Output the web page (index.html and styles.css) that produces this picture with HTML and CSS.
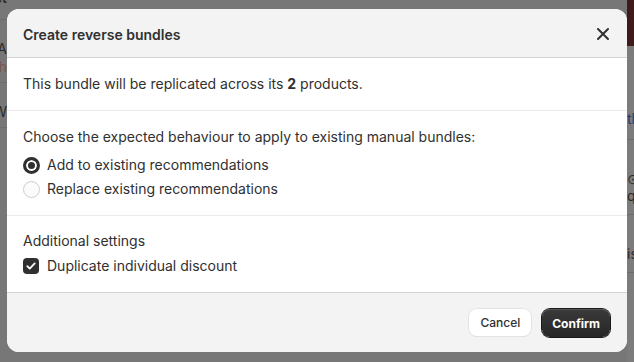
FILE: index.html
```html
<!DOCTYPE html>
<html lang="en">
<head>
    <meta charset="UTF-8">
    <meta name="viewport" content="width=device-width, initial-scale=1.0">
    <title>Create reverse bundles</title>
    <link rel="stylesheet" href="styles.css">
</head>
<body>
    <!-- page behind the modal, only the edges show -->
    <div class="page">
        <div class="page-left">
            <div class="row row-head">Product</div>
            <div class="row">IDA<br><span class="red">Sh</span></div>
            <div class="row">W</div>
        </div>
        <div class="page-right">
            <div class="thumb"></div>
            <div class="link">th</div>
            <div class="row">⊙<br>qu</div>
            <div class="row">is</div>
        </div>
    </div>

    <div class="overlay">
        <div class="modal">
            <div class="modal-header">
                <h2>Create reverse bundles</h2>
                <button class="close" aria-label="Close">
                    <svg width="20" height="20" viewBox="0 0 20 20"><path d="M5 5l10 10M15 5L5 15" stroke="#303030" stroke-width="2" stroke-linecap="round"/></svg>
                </button>
            </div>
            <div class="section">
                <p>This bundle will be replicated across its <b>2</b> products.</p>
            </div>
            <div class="section">
                <p>Choose the expected behaviour to apply to existing manual bundles:</p>
                <div class="options">
                    <label class="option"><span class="radio checked"></span>Add to existing recommendations</label>
                    <label class="option"><span class="radio"></span>Replace existing recommendations</label>
                </div>
            </div>
            <div class="section last">
                <p>Additional settings</p>
                <div class="options">
                    <label class="option">
                        <span class="checkbox">
                            <svg width="12" height="12" viewBox="0 0 12 12"><path d="M2.3 6.2l2.4 2.4 5-5.2" fill="none" stroke="#fff" stroke-width="1.8" stroke-linecap="round" stroke-linejoin="round"/></svg>
                        </span>Duplicate individual discount
                    </label>
                </div>
            </div>
            <div class="modal-footer">
                <button class="btn">Cancel</button>
                <button class="btn btn-primary">Confirm</button>
            </div>
        </div>
    </div>
</body>
</html>
```

FILE: styles.css
```css
body {
    margin: 0;
    font-family: Inter, "Noto Sans", sans-serif;
    font-size: 14px;
    color: #303030;
    background: #777;
    height: 362px;
    overflow: hidden;
}
.page {
    display: flex;
    justify-content: space-between;
    height: 362px;
}
.page-left {
    width: 7px;
    overflow: hidden;
    display: flex;
    flex-direction: column;
    align-items: flex-end;
    color: #2a2a2a;
    font-size: 14px;
    white-space: nowrap;
}
.page-left .row {
    border-bottom: 1px solid #6c6c6c;
    padding: 20px 0 6px;
    line-height: 18px;
    width: 60px;
    text-align: right;
}
.page-left .row-head {
    margin-top: -11px;
    padding-top: 0;
    font-weight: 600;
    padding-bottom: 12px;
}
.red {
    color: #7a5550;
}
.page-right {
    width: 7px;
    overflow: hidden;
    background: #7c7c7c;
    color: #2a2a2a;
    font-size: 14px;
    white-space: nowrap;
}
.thumb {
    height: 46px;
    background: #3e1a1a;
}
.link {
    color: #1d3f73;
    padding: 64px 0 12px;
    border-bottom: 1px solid #6c6c6c;
}
.page-right .row {
    padding: 30px 0 10px;
    border-bottom: 1px solid #6c6c6c;
}
.overlay {
    position: absolute;
    top: 0;
    left: 0;
    right: 0;
    bottom: 0;
    padding: 9px 7px;
}
.modal {
    background: #fff;
    border-radius: 12px;
    overflow: hidden;
    display: flex;
    flex-direction: column;
}
.modal-header {
    background: #f3f3f3;
    border-bottom: 1px solid #d4d4d4;
    height: 49px;
    box-sizing: border-box;
    display: flex;
    align-items: center;
    justify-content: space-between;
    padding: 2px 14px 0 16px;
    flex-shrink: 0;
}
.modal-header h2 {
    margin: 0;
    font-size: 14px;
    font-weight: 600;
}
.close {
    border: none;
    background: none;
    padding: 0;
    width: 20px;
    height: 20px;
}
.section {
    padding: 16px;
    border-bottom: 1px solid #ebebeb;
    flex-shrink: 0;
}
.section.last {
    border-bottom: none;
    padding-top: 15px;
}
.section p {
    margin: 0;
    line-height: 20px;
}
.section b {
    font-weight: 700;
}
.options {
    display: flex;
    flex-direction: column;
    gap: 4px;
    margin-top: 8px;
}
.section.last .options {
    margin-top: 5px;
}
.option {
    display: flex;
    align-items: center;
    gap: 7px;
    line-height: 20px;
}
.radio {
    width: 17px;
    height: 17px;
    border-radius: 50%;
    box-sizing: border-box;
    border: 1px solid #cdcdcd;
    background: #fbfbfb;
}
.radio.checked {
    border: 3px solid #303030;
    background: #303030;
    box-shadow: inset 0 0 0 2px #fff;
}
.checkbox {
    width: 16px;
    height: 16px;
    margin-right: 1px;
    border-radius: 4px;
    background: #303030;
    display: flex;
    align-items: center;
    justify-content: center;
}
.modal-footer {
    background: #f3f3f3;
    border-top: 1px solid #d4d4d4;
    display: flex;
    justify-content: flex-end;
    gap: 11px;
    padding: 16px 17px 15px;
    flex-shrink: 0;
}
.btn {
    font-family: Inter, "Noto Sans", sans-serif;
    font-size: 12px;
    font-weight: 550;
    color: #303030;
    background: #fff;
    border: none;
    border-radius: 8px;
    height: 27px;
    padding: 0 11px;
    box-shadow: 0 0 0 1px #e3e3e3, 0 1px 0 #d4d4d4;
}
.btn-primary {
    background: linear-gradient(#3a3a3a, #262626);
    color: #fff;
    font-weight: 650;
    height: 28px;
    padding: 0 10px;
    box-shadow: 0 0 0 1px #1a1a1a, inset 0 1px 0 #555;
}
```
